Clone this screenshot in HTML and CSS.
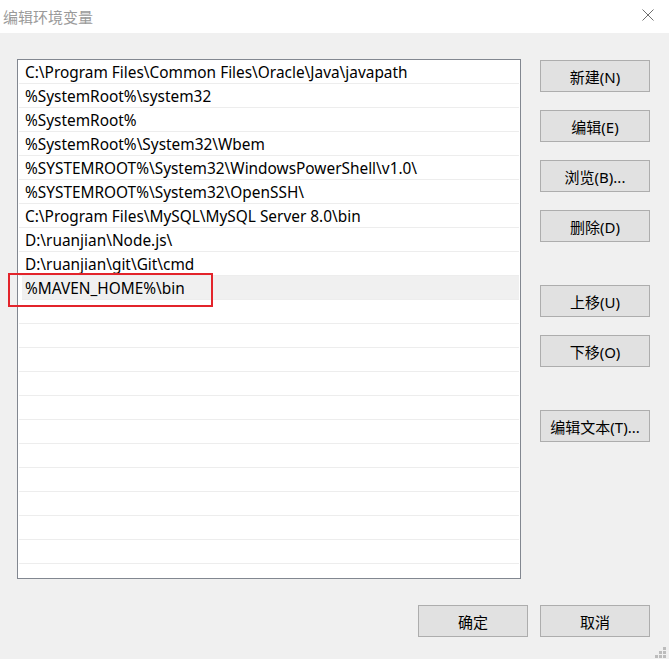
FILE: index.html
```html
<!DOCTYPE html>
<html lang="zh-CN">
<head>
<meta charset="utf-8">
<title>编辑环境变量</title>
<link rel="stylesheet" href="styles.css">
</head>
<body>
<div class="window">
  <div class="titlebar">
    <span class="title">编辑环境变量</span>
    <svg class="close" width="12" height="12" viewBox="0 0 12 12"><path d="M0.5 0.5 L11.5 11.5 M11.5 0.5 L0.5 11.5" stroke="#6e6e6e" stroke-width="1" fill="none"/></svg>
  </div>
  <div class="content">
    <div class="main">
      <div class="list">
        <div class="row">C:\Program Files\Common Files\Oracle\Java\javapath</div>
        <div class="row">%SystemRoot%\system32</div>
        <div class="row">%SystemRoot%</div>
        <div class="row">%SystemRoot%\System32\Wbem</div>
        <div class="row">%SYSTEMROOT%\System32\WindowsPowerShell\v1.0\</div>
        <div class="row">%SYSTEMROOT%\System32\OpenSSH\</div>
        <div class="row">C:\Program Files\MySQL\MySQL Server 8.0\bin</div>
        <div class="row">D:\ruanjian\Node.js\</div>
        <div class="row">D:\ruanjian\git\Git\cmd</div>
        <div class="row selected">%MAVEN_HOME%\bin</div>
        <div class="row"></div>
        <div class="row"></div>
        <div class="row"></div>
        <div class="row"></div>
        <div class="row"></div>
        <div class="row"></div>
        <div class="row"></div>
        <div class="row"></div>
        <div class="row"></div>
        <div class="row"></div>
        <div class="row"></div>
      </div>
      <div class="side">
        <button class="btn">新建(N)</button>
        <button class="btn">编辑(E)</button>
        <button class="btn">浏览(B)...</button>
        <button class="btn">删除(D)</button>
        <button class="btn group">上移(U)</button>
        <button class="btn">下移(O)</button>
        <button class="btn group">编辑文本(T)...</button>
      </div>
    </div>
    <div class="footer">
      <button class="btn">确定</button>
      <button class="btn">取消</button>
    </div>
  </div>
  <div class="highlight-box"></div>
  <svg class="grip" width="12" height="12" viewBox="0 0 12 12">
    <rect x="8" y="0" width="3" height="3" fill="#bcbcbc"/>
    <rect x="4" y="4" width="3" height="3" fill="#bcbcbc"/>
    <rect x="8" y="4" width="3" height="3" fill="#bcbcbc"/>
    <rect x="0" y="8" width="3" height="3" fill="#bcbcbc"/>
    <rect x="4" y="8" width="3" height="3" fill="#bcbcbc"/>
    <rect x="8" y="8" width="3" height="3" fill="#bcbcbc"/>
  </svg>
</div>
</body>
</html>
```

FILE: styles.css
```css
* { box-sizing: border-box; }
html, body { margin: 0; padding: 0; }
body {
  width: 669px;
  height: 659px;
  background: #f0f0f0;
  font-family: "Noto Sans", "Noto Sans CJK SC", sans-serif;
  font-size: 15px;
  color: #000;
  overflow: hidden;
}
.window {
  position: relative;
  width: 669px;
  height: 659px;
}
.titlebar {
  height: 33px;
  background: #fff;
  display: flex;
  align-items: center;
  justify-content: space-between;
  padding: 0 15px 0 3px;
}
.title {
  font-family: "Noto Sans CJK SC", sans-serif;
  font-size: 15px;
  color: #9a9a9a;
  line-height: 18px;
  margin-top: 1px;
}
.close { display: block; margin-top: -3px; }
.content {
  padding: 26px 19px 0 17px;
}
.main {
  display: flex;
  gap: 19px;
}
.list {
  width: 504px;
  height: 520px;
  border: 1px solid #828790;
  background: #fff;
  overflow: hidden;
}
.row {
  height: 24px;
  margin: 0 1px;
  padding: 3px 0 0 6px;
  border-bottom: 1px solid #ededed;
  line-height: 20px;
  white-space: nowrap;
  font-size: 15.4px;
}
.row.selected {
  background: #f0f0f0;
  margin-left: 4px;
  padding-left: 3px;
}
.side {
  display: flex;
  flex-direction: column;
  gap: 18px;
  padding-top: 1px;
}
.btn {
  width: 110px;
  height: 32px;
  background: #e1e1e1;
  border: 1px solid #adadad;
  border-radius: 0;
  font-family: "Noto Sans", "Noto Sans CJK SC", sans-serif;
  font-size: 15px;
  color: #000;
  padding: 0;
  margin: 0;
}
.side .group { margin-top: 25px; }
.footer {
  display: flex;
  justify-content: flex-end;
  gap: 12px;
  margin-top: 26px;
}
.highlight-box {
  position: absolute;
  left: 8px;
  top: 273px;
  width: 205px;
  height: 34px;
  border: 2px solid #e3242b;
}
.grip {
  position: absolute;
  left: 655px;
  top: 647px;
}
```
